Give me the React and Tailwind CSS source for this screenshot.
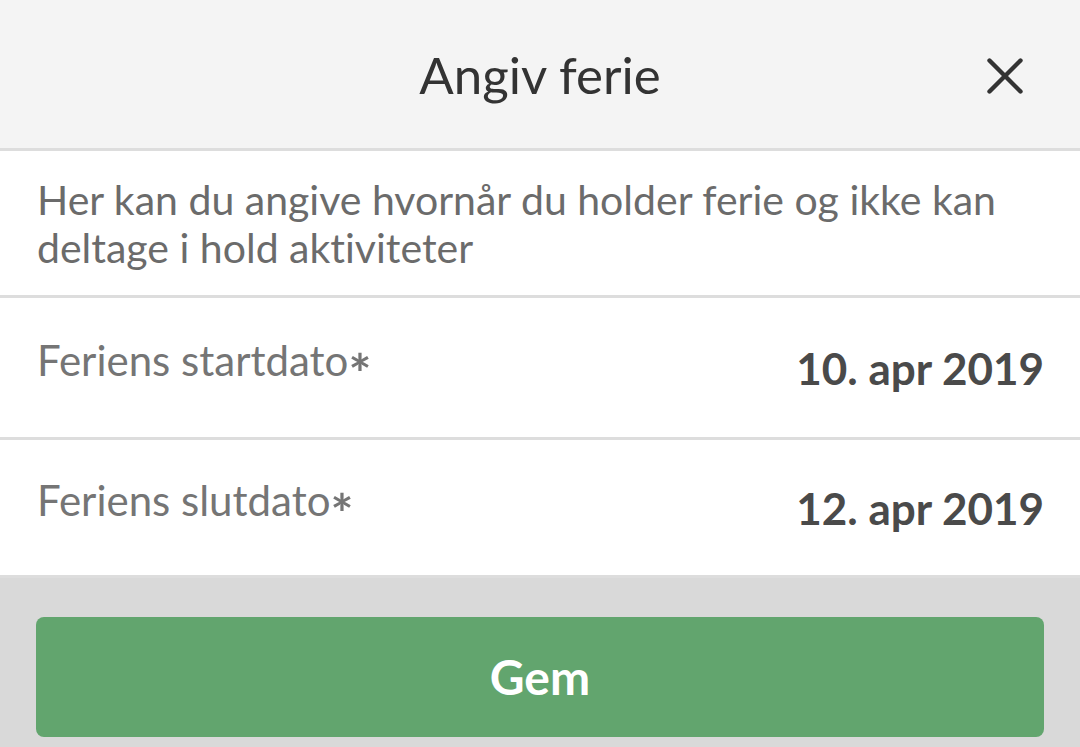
import { X } from "lucide-react";

export default function App() {
  const rows = [
    { label: "Feriens startdato", value: "10. apr 2019", h: "h-[142px]" },
    { label: "Feriens slutdato", value: "12. apr 2019", h: "h-[138px]" },
  ];

  return (
    <div className="w-[1080px] h-[747px] flex flex-col bg-white font-['Lato',sans-serif] [font-variant-ligatures:none] overflow-hidden">
      {/* Header */}
      <div className="relative h-[151px] shrink-0 flex items-center justify-center bg-[#f4f4f4] border-b-[3px] border-[#dddddd]">
        <h1 className="text-[51px] text-[#333333] leading-none">Angiv ferie</h1>
        <button className="absolute right-[44px] top-[45px] text-[#333333]">
          <X size={62} strokeWidth={1.7} />
        </button>
      </div>

      {/* Description */}
      <div className="px-[37px] pt-[25px] pb-[23px] border-b-[3px] border-[#dddddd] text-[41px] leading-[48px] text-[#6b6b6b]">
        Her kan du angive hvornår du holder ferie og ikke kan deltage i hold aktiviteter
      </div>

      {/* Date rows */}
      {rows.map((row, idx) => (
        <div
          key={idx}
          className={`${row.h} shrink-0 flex items-center justify-between pl-[37px] pr-[36px] border-b-[3px] border-[#dddddd]`}
        >
          <span className="text-[42px] leading-[50px] text-[#757575]">
            {row.label}
            <span className="align-[-0.32em] text-[54px] leading-none font-bold">*</span>
          </span>
          <span className="text-[44px] font-bold text-[#4a4a4a]">
            {row.value}
          </span>
        </div>
      ))}

      {/* Footer */}
      <div className="flex-1 bg-[#d9d9d9] px-[36px] pt-[39px]">
        <button className="w-full h-[120px] rounded-[8px] bg-[#62a56e] text-white text-[48px] font-bold">
          Gem
        </button>
      </div>
    </div>
  );
}
